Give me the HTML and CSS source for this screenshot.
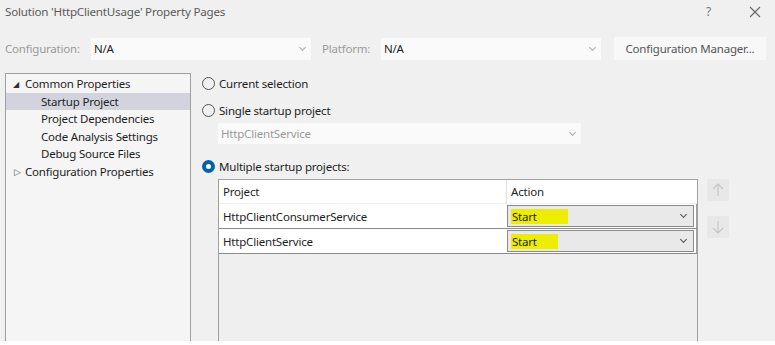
FILE: index.html
```html
<!DOCTYPE html>
<html lang="en">
<head>
    <meta charset="UTF-8">
    <title>Solution 'HttpClientUsage' Property Pages</title>
    <link rel="stylesheet" href="styles.css">
</head>
<body>
    <div class="dialog">
        <div class="titlebar">
            <span class="title">Solution 'HttpClientUsage' Property Pages</span>
            <span class="title-btn help">?</span>
            <span class="title-btn close">
                <svg width="12" height="12" viewBox="0 0 12 12"><path d="M1 1 L11 11 M11 1 L1 11" stroke="#666" stroke-width="1.1" fill="none"/></svg>
            </span>
        </div>

        <div class="config-row">
            <span class="label config-label">Configuration:</span>
            <div class="combo config-combo"><span>N/A</span><span class="chev"></span></div>
            <span class="label platform-label">Platform:</span>
            <div class="combo platform-combo"><span>N/A</span><span class="chev"></span></div>
            <div class="btn config-btn">Configuration Manager...</div>
        </div>

        <div class="main">
            <div class="tree">
                <div class="tree-item"><span class="arrow">&#9698;</span>Common Properties</div>
                <div class="tree-item child selected">Startup Project</div>
                <div class="tree-item child">Project Dependencies</div>
                <div class="tree-item child">Code Analysis Settings</div>
                <div class="tree-item child">Debug Source Files</div>
                <div class="tree-item"><span class="arrow open">&#9655;</span>Configuration Properties</div>
            </div>

            <div class="page">
                <div class="radio-row"><span class="radio"></span>Current selection</div>
                <div class="radio-row single"><span class="radio"></span>Single startup project</div>
                <div class="combo disabled single-combo"><span>HttpClientService</span><span class="chev"></span></div>
                <div class="radio-row multi"><span class="radio checked"></span>Multiple startup projects:</div>

                <div class="grid-area">
                    <div class="grid">
                        <div class="grid-row header">
                            <div class="cell project">Project</div>
                            <div class="cell action">Action</div>
                        </div>
                        <div class="grid-row">
                            <div class="cell project">HttpClientConsumerService</div>
                            <div class="cell action">
                                <div class="action-combo"><span class="hl wide">Start</span><span class="chev dark"></span></div>
                            </div>
                        </div>
                        <div class="grid-row">
                            <div class="cell project">HttpClientService</div>
                            <div class="cell action">
                                <div class="action-combo"><span class="hl">Start</span><span class="chev dark"></span></div>
                            </div>
                        </div>
                    </div>
                    <div class="move-btns">
                        <div class="move-btn">
                            <svg width="12" height="14" viewBox="0 0 12 14"><path d="M6 1 V13 M1 6 L6 1 L11 6" stroke="#c4c4c4" stroke-width="1.1" fill="none"/></svg>
                        </div>
                        <div class="move-btn">
                            <svg width="12" height="14" viewBox="0 0 12 14"><path d="M6 1 V13 M1 8 L6 13 L11 8" stroke="#c4c4c4" stroke-width="1.1" fill="none"/></svg>
                        </div>
                    </div>
                </div>
            </div>
        </div>
    </div>
</body>
</html>
```

FILE: styles.css
```css
body {
    margin: 0;
    background: #ffffff;
    font-family: "Noto Sans", "Open Sans", sans-serif;
    font-size: 11.5px;
    letter-spacing: -0.2px;
    color: #1e1e1e;
}
.dialog {
    width: 775px;
    height: 341px;
    background: #f0f0f0;
    overflow: hidden;
}
.titlebar {
    height: 23px;
    display: flex;
    align-items: center;
    padding-left: 5px;
}
.title {
    flex: 1;
    font-size: 11.6px;
    color: #5a5a5a;
}
.title-btn {
    color: #777;
    font-size: 12px;
}
.help {
    margin-right: 38px;
}
.close {
    margin-right: 14px;
    display: flex;
}
.config-row {
    display: flex;
    align-items: center;
    margin-top: 14px;
    height: 23px;
    padding-left: 5px;
}
.label {
    color: #9a9a9a;
}
.config-label {
    width: 86px;
}
.combo {
    display: flex;
    align-items: center;
    justify-content: space-between;
    height: 22px;
    background: #fafafa;
    padding: 0 6px 0 3px;
    box-sizing: border-box;
}
.config-combo {
    width: 220px;
}
.platform-label {
    width: 59px;
    margin-left: 11px;
}
.platform-combo {
    width: 220px;
}
.chev {
    width: 4px;
    height: 4px;
    border-right: 1px solid #aaa;
    border-bottom: 1px solid #aaa;
    transform: rotate(45deg);
    margin-top: -3px;
}
.chev.dark {
    border-color: #555;
}
.btn {
    background: #f8f8f8;
    color: #555;
    height: 23px;
    display: flex;
    align-items: center;
    justify-content: center;
}
.config-btn {
    width: 152px;
    margin-left: 13px;
}
.main {
    display: flex;
    margin-top: 13px;
    height: 268px;
}
.tree {
    width: 184px;
    margin-left: 5px;
    background: #f5f5f5;
    border: 1px solid #a0a0a0;
    border-bottom: none;
    padding-top: 1px;
}
.tree-item {
    height: 17.6px;
    line-height: 17.6px;
    padding-left: 19px;
    white-space: nowrap;
    position: relative;
}
.tree-item.child {
    padding-left: 35px;
}
.tree-item.selected {
    background: #d3d3de;
}
.arrow {
    position: absolute;
    left: 7px;
    font-size: 8px;
    color: #333;
}
.arrow.open {
    left: 8px;
    font-size: 9px;
    color: #555;
}
.page {
    flex: 1;
    padding-left: 11px;
    padding-top: 2px;
    display: flex;
    flex-direction: column;
}
.radio-row {
    display: flex;
    align-items: center;
    height: 17px;
}
.radio {
    width: 11px;
    height: 11px;
    border: 1px solid #555;
    border-radius: 50%;
    margin-right: 4px;
    box-sizing: content-box;
}
.radio.checked {
    width: 5px;
    height: 5px;
    border: 4px solid #0063b1;
    background: #ffffff;
}
.single {
    margin-top: 10px;
}
.single-combo {
    width: 363px;
    margin-left: 16px;
    margin-top: 4px;
    height: 21px;
    color: #9a9a9a;
}
.multi {
    margin-top: 14px;
}
.grid-area {
    display: flex;
    margin-top: 4px;
    margin-left: 16px;
    flex: 1;
}
.grid {
    width: 478px;
    border: 1px solid #a0a0a0;
    border-bottom: none;
    background: #efefef;
}
.grid-row {
    display: flex;
    height: 24px;
    background: #ffffff;
    border-bottom: 1px solid #8a8a8a;
}
.grid-row.header {
    height: 23px;
    border-bottom: 1px solid #f0f0f0;
}
.cell {
    display: flex;
    align-items: center;
}
.cell.project {
    width: 283px;
    padding-left: 4px;
}
.header .cell.project {
    border-right: 1px solid #e0e0e0;
}
.cell.action {
    flex: 1;
    padding-left: 4px;
}
.grid-row:not(.header) .cell.action {
    padding: 0 2px 0 1px;
    border-right: 1px solid #a0a0a0;
}
.action-combo {
    flex: 1;
    height: 22px;
    box-sizing: border-box;
    border: 1px solid #8a8a8a;
    background: #e9e9e9;
    display: flex;
    align-items: center;
    justify-content: space-between;
    padding: 0 7px 0 3px;
}
.hl {
    background: #eded00;
    width: 46px;
    padding-left: 1px;
    line-height: 15px;
}
.hl.wide {
    width: 56px;
}
.move-btns {
    display: flex;
    flex-direction: column;
    gap: 15px;
    margin-left: 9px;
}
.move-btn {
    width: 22px;
    height: 22px;
    background: #e8e8e8;
    display: flex;
    align-items: center;
    justify-content: center;
}
```
